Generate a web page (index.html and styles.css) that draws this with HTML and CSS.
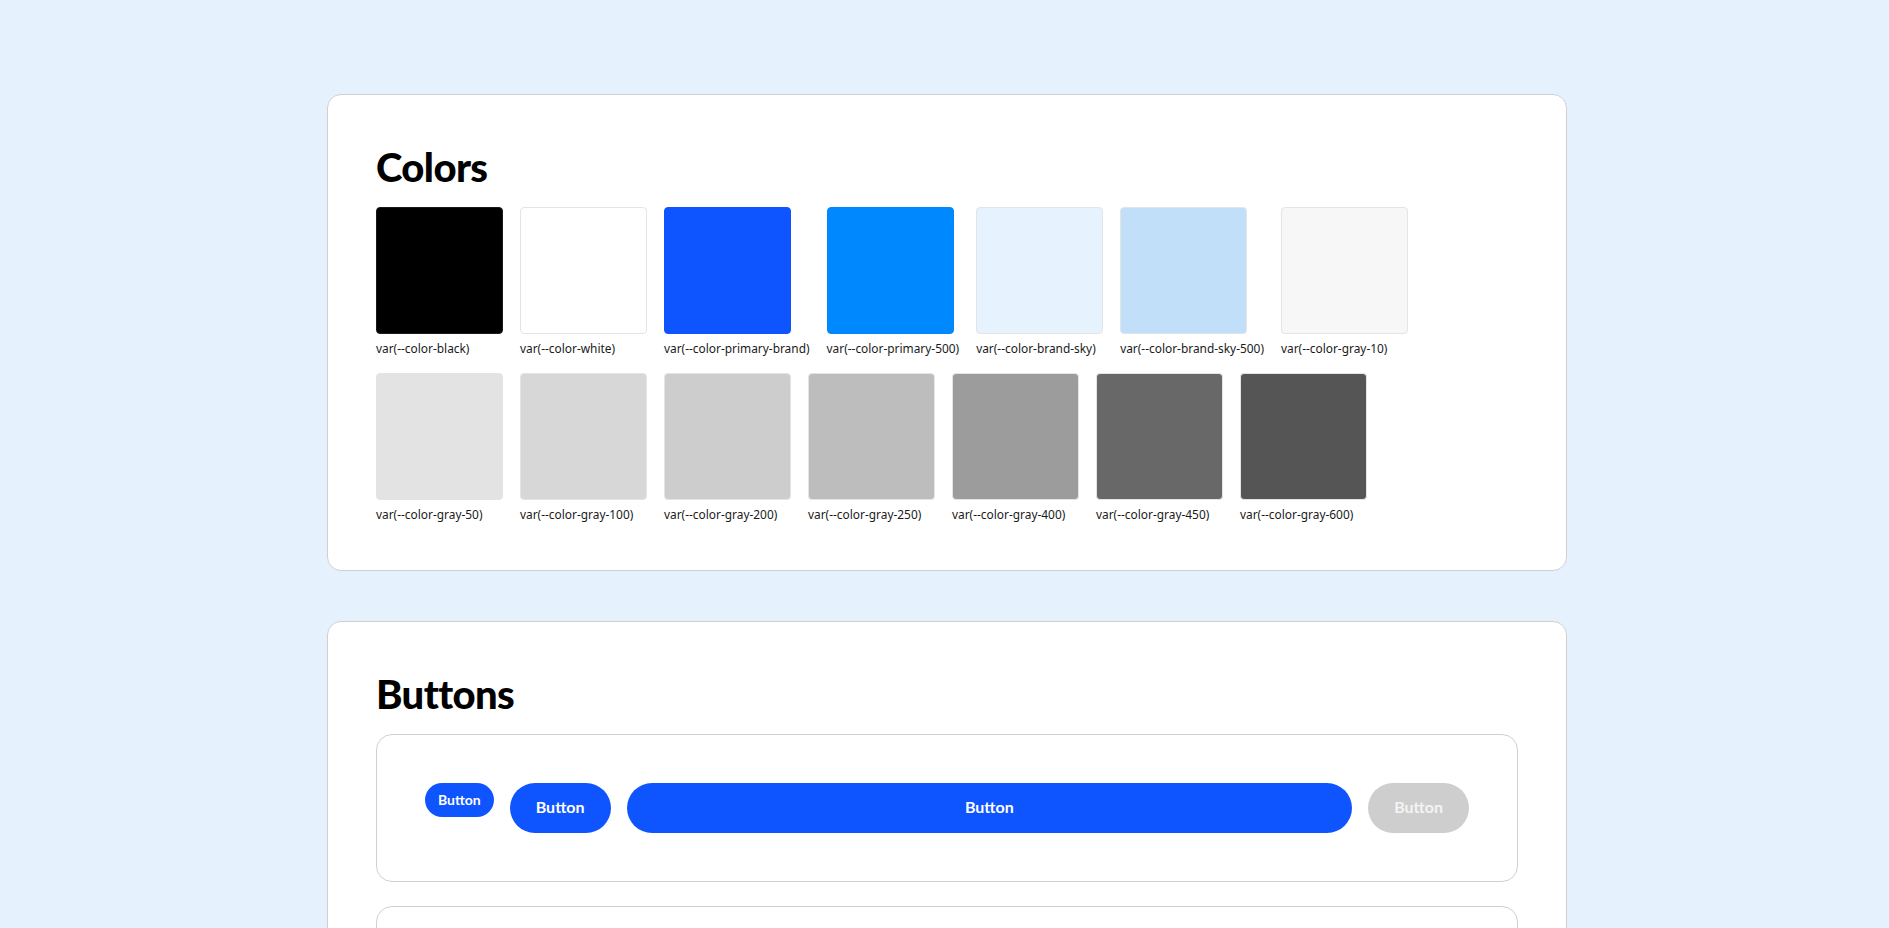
FILE: index.html
```html
<!DOCTYPE html>
<html>
<head>
	<meta charset="UTF-8">
	<title>Styleguide</title>
	<link rel="stylesheet" href="styles.css">
</head>

<body>
<main class="page">
	<section class="card">
		<h2 class="card-title">Colors</h2>
		<div class="swatches">
			<div class="swatch-item"><div class="swatch c-black"></div><span class="swatch-name">var(--color-black)</span></div>
			<div class="swatch-item"><div class="swatch c-white"></div><span class="swatch-name">var(--color-white)</span></div>
			<div class="swatch-item"><div class="swatch c-primary-brand"></div><span class="swatch-name">var(--color-primary-brand)</span></div>
			<div class="swatch-item"><div class="swatch c-primary-500"></div><span class="swatch-name">var(--color-primary-500)</span></div>
			<div class="swatch-item"><div class="swatch c-brand-sky"></div><span class="swatch-name">var(--color-brand-sky)</span></div>
			<div class="swatch-item"><div class="swatch c-brand-sky-500"></div><span class="swatch-name">var(--color-brand-sky-500)</span></div>
			<div class="swatch-item"><div class="swatch c-gray-10"></div><span class="swatch-name">var(--color-gray-10)</span></div>
			<div class="swatch-item"><div class="swatch c-gray-50"></div><span class="swatch-name">var(--color-gray-50)</span></div>
			<div class="swatch-item"><div class="swatch c-gray-100"></div><span class="swatch-name">var(--color-gray-100)</span></div>
			<div class="swatch-item"><div class="swatch c-gray-200"></div><span class="swatch-name">var(--color-gray-200)</span></div>
			<div class="swatch-item"><div class="swatch c-gray-250"></div><span class="swatch-name">var(--color-gray-250)</span></div>
			<div class="swatch-item"><div class="swatch c-gray-400"></div><span class="swatch-name">var(--color-gray-400)</span></div>
			<div class="swatch-item"><div class="swatch c-gray-450"></div><span class="swatch-name">var(--color-gray-450)</span></div>
			<div class="swatch-item"><div class="swatch c-gray-600"></div><span class="swatch-name">var(--color-gray-600)</span></div>
		</div>
	</section>

	<section class="card">
		<h2 class="card-title">Buttons</h2>
		<div class="demo-box">
			<button class="btn btn-sm">Button</button>
			<button class="btn btn-md">Button</button>
			<button class="btn btn-md btn-block">Button</button>
			<button class="btn btn-md btn-disabled" disabled>Button</button>
		</div>
		<div class="demo-box">
			<button class="btn btn-md btn-outline">Button</button>
		</div>
	</section>
</main>
</body>
</html>
```

FILE: styles.css
```css
:root {
	--color-black: #000000;
	--color-white: #ffffff;
	--color-primary-brand: #0f55ff;
	--color-primary-500: #0088ff;
	--color-brand-sky: #e6f2fd;
	--color-brand-sky-500: #c2dffa;
	--color-gray-10: #f7f7f7;
	--color-gray-50: #e3e3e3;
	--color-gray-100: #d7d7d7;
	--color-gray-200: #cdcdcd;
	--color-gray-250: #bcbdbc;
	--color-gray-400: #9c9c9c;
	--color-gray-450: #686868;
	--color-gray-600: #555555;
}

body {
	margin: 0;
	padding-left: 5px;
	background-color: #e5f2fe;
	font-family: "Noto Sans", "Open Sans", sans-serif;
	color: #111;
}

.page {
	width: 1240px;
	margin: 0 auto;
	padding: 94px 0 48px;
	display: flex;
	flex-direction: column;
	gap: 50px;
}

.card {
	background: var(--color-white);
	border: 1px solid #d0d0d0;
	border-radius: 14px;
	padding: 48px;
}

.card-title {
	margin: 0 0 16px;
	font-family: Lato, "Noto Sans", sans-serif;
	font-weight: 900;
	font-size: 40px;
	line-height: 48px;
	letter-spacing: -0.6px;
	color: #000;
}

/* colors */
.swatches {
	display: flex;
	flex-wrap: wrap;
	gap: 17px;
}
.swatch-item {
	display: flex;
	flex-direction: column;
	min-width: 127px;
}
.swatch {
	width: 127px;
	height: 127px;
	box-sizing: border-box;
	border: 1px solid #e4e4e4;
	border-radius: 4px;
}
.swatch-name {
	margin-top: 6px;
	font-size: 11.9px;
	line-height: 16px;
	white-space: nowrap;
	color: #1a1a1a;
}

.c-black { background: var(--color-black); border-color: #1a1a1a; }
.c-white { background: var(--color-white); }
.c-primary-brand { background: var(--color-primary-brand); border-color: var(--color-primary-brand); }
.c-primary-500 { background: var(--color-primary-500); border-color: var(--color-primary-500); }
.c-brand-sky { background: var(--color-brand-sky); }
.c-brand-sky-500 { background: var(--color-brand-sky-500); }
.c-gray-10 { background: var(--color-gray-10); }
.c-gray-50 { background: var(--color-gray-50); }
.c-gray-100 { background: var(--color-gray-100); }
.c-gray-200 { background: var(--color-gray-200); }
.c-gray-250 { background: var(--color-gray-250); }
.c-gray-400 { background: var(--color-gray-400); }
.c-gray-450 { background: var(--color-gray-450); }
.c-gray-600 { background: var(--color-gray-600); }

/* buttons */
.demo-box {
	display: flex;
	align-items: flex-start;
	gap: 16px;
	padding: 48px;
	border: 1px solid #d0d0d0;
	border-radius: 16px;
	margin-bottom: 24px;
}
.btn {
	border: none;
	border-radius: 999px;
	background: var(--color-primary-brand);
	color: var(--color-white);
	font-family: Lato, "Noto Sans", sans-serif;
	font-weight: 700;
	cursor: pointer;
}
.btn-sm {
	height: 34px;
	padding: 0 13px 2px;
	font-size: 14px;
}
.btn-md {
	height: 50px;
	padding: 0 26px 4px;
	font-size: 16px;
}
.btn-block {
	flex: 1;
}
.btn-disabled {
	background: #cecece;
	color: #f4f4f4;
	cursor: default;
}
.btn-outline {
	background: var(--color-white);
	color: var(--color-primary-brand);
	border: 2px solid var(--color-primary-brand);
}
```
